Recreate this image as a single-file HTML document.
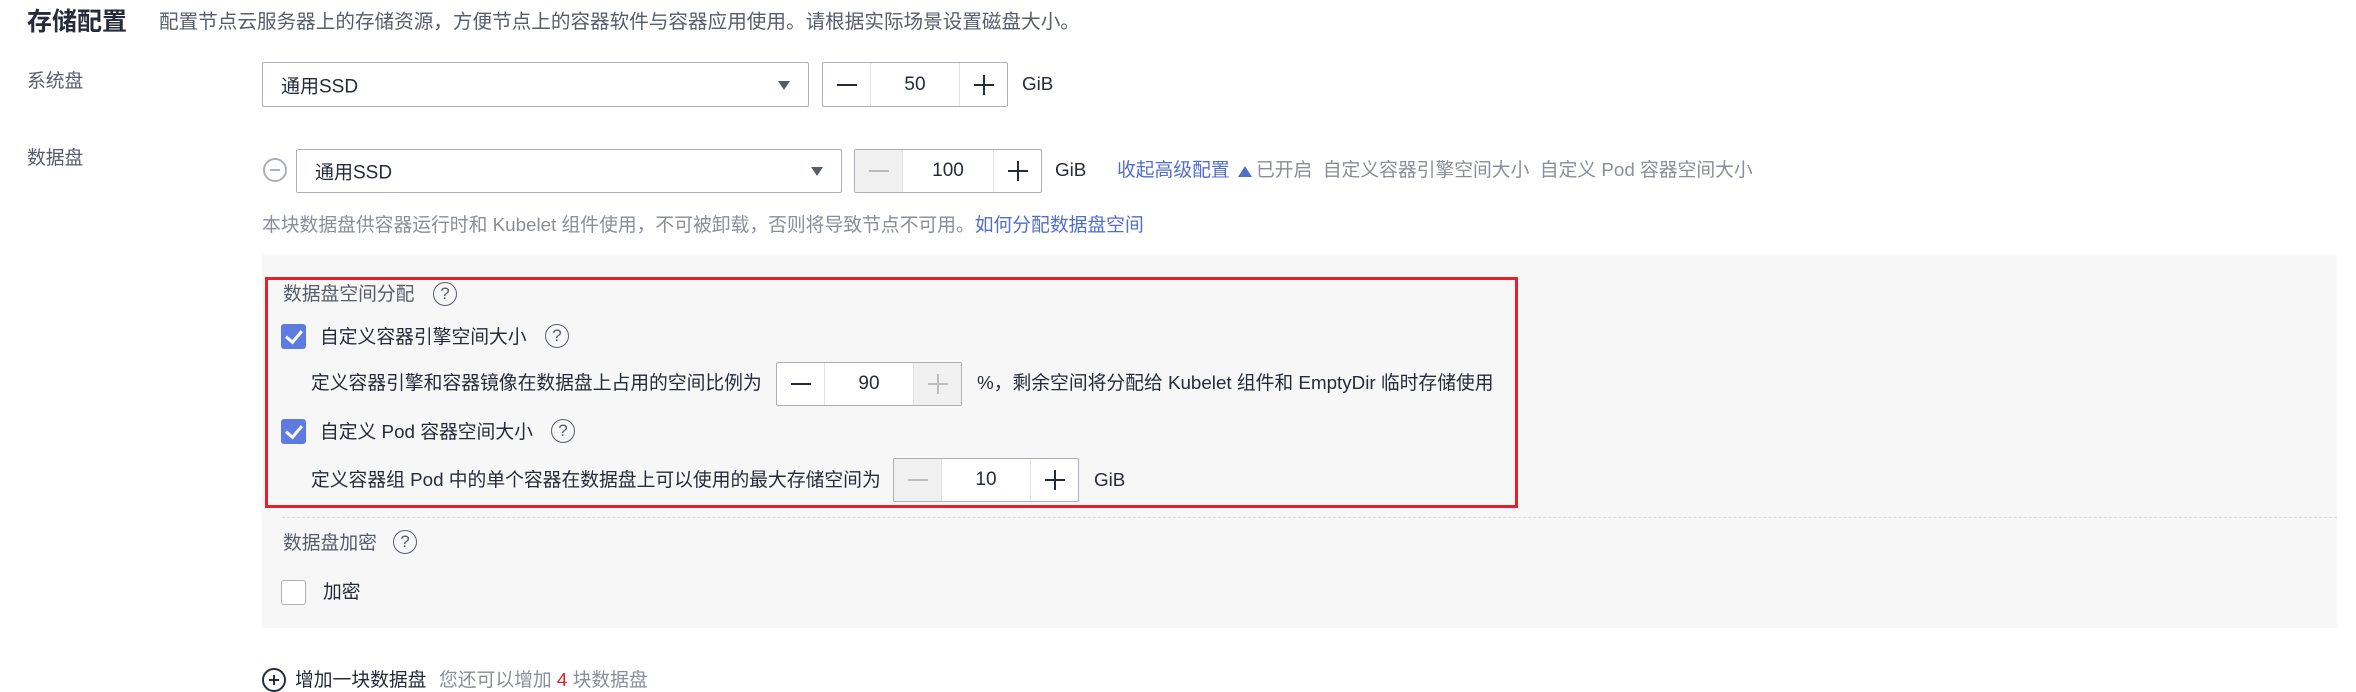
<!DOCTYPE html>
<html><head><meta charset="utf-8"><style>
*{margin:0;padding:0;box-sizing:border-box}
body{width:2356px;height:690px;background:#fff;position:relative;overflow:hidden;font-family:"Liberation Sans","Noto Sans CJK SC",sans-serif;font-size:18.8px;color:#252b3a}
.a{position:absolute;white-space:nowrap;line-height:1}
.lab{color:#575d6c}
.hint{color:#8a8e99}
.link{color:#526ecc}
.sel{position:absolute;border:1.5px solid #adb0b8;border-radius:2px;background:#fff}
.sel span{position:absolute;left:18px;top:50%;transform:translateY(-50%);font-size:19px}
.sel i{position:absolute;right:18px;top:50%;margin-top:-4px;border-left:6px solid transparent;border-right:6px solid transparent;border-top:9px solid #575d6c}
.stp{position:absolute;border:1.5px solid #adb0b8;border-radius:2px;background:#fff;display:flex}
.stp div{display:flex;align-items:center;justify-content:center;font-size:19px}
.stp .b{width:47px;position:relative}
.stp .m{flex:1;border-left:1.5px solid #dfe1e6;border-right:1.5px solid #dfe1e6}
.stp .dis{background:#f0f0f0}
.h{position:absolute;width:2px;height:20px;left:50%;top:50%;margin:-10px 0 0 -1px}
.w{position:absolute;height:2px;width:20px;left:50%;top:50%;margin:-1px 0 0 -10px}
.q{position:absolute;width:24px;height:24px;border:1.8px solid #575d6c;border-radius:50%;font-size:17px;text-align:center;line-height:21px;color:#575d6c}
.cb{position:absolute;width:25px;height:25px;border-radius:3px;background:#5e7ce0}
.cb:after{content:"";position:absolute;left:8px;top:3px;width:7px;height:13px;border-right:3px solid #fff;border-bottom:3px solid #fff;transform:rotate(40deg)}
</style></head><body>
<div class="a" style="left:27px;top:10px;font-size:25px;font-weight:bold">存储配置</div>
<div class="a lab" style="left:159px;top:13px;font-size:19.6px">配置节点云服务器上的存储资源，方便节点上的容器软件与容器应用使用。请根据实际场景设置磁盘大小。</div>

<div class="a lab" style="left:27px;top:72px">系统盘</div>
<div class="sel" style="left:262px;top:62px;width:547px;height:45px"><span>通用SSD</span><i></i></div>
<div class="stp" style="left:822px;top:62px;width:186px;height:45px"><div class="b"><b class="w" style="background:#252b3a"></b></div><div class="m">50</div><div class="b"><b class="w" style="background:#252b3a"></b><b class="h" style="background:#252b3a"></b></div></div>
<div class="a" style="left:1022px;top:75px">GiB</div>

<div class="a lab" style="left:27px;top:149px">数据盘</div>
<div class="a" style="left:263px;top:158px;width:24px;height:24px;border:2px solid #adb0b8;border-radius:50%"><b style="position:absolute;left:5px;top:9px;width:10px;height:2px;background:#adb0b8"></b></div>
<div class="sel" style="left:296px;top:149px;width:546px;height:44px"><span>通用SSD</span><i></i></div>
<div class="stp" style="left:854px;top:149px;width:188px;height:44px"><div class="b dis"><b class="w" style="background:#bbb"></b></div><div class="m">100</div><div class="b"><b class="w" style="background:#252b3a"></b><b class="h" style="background:#252b3a"></b></div></div>
<div class="a" style="left:1055px;top:161px">GiB</div>
<div class="a link" style="left:1117px;top:161px">收起高级配置</div>
<div class="a" style="left:1238px;top:166px;border-left:7px solid transparent;border-right:7px solid transparent;border-bottom:11px solid #526ecc"></div>
<div class="a hint" style="left:1256px;top:161px">已开启&nbsp; 自定义容器引擎空间大小&nbsp; 自定义 Pod 容器空间大小</div>

<div class="a hint" style="left:262px;top:216px">本块数据盘供容器运行时和 Kubelet 组件使用，不可被卸载，否则将导致节点不可用。<span class="link">如何分配数据盘空间</span></div>

<div class="a" style="left:262px;top:255px;width:2075px;height:373px;background:#f7f7f7"></div>
<div class="a" style="left:265px;top:277px;width:1253px;height:231px;border:3px solid #e5202a"></div>
<div class="a lab" style="left:283px;top:285px">数据盘空间分配</div>
<div class="q" style="left:433px;top:282px">?</div>
<div class="cb" style="left:281px;top:324px"></div>
<div class="a" style="left:320px;top:328px">自定义容器引擎空间大小</div>
<div class="q" style="left:545px;top:324px">?</div>
<div class="a" style="left:311px;top:374px">定义容器引擎和容器镜像在数据盘上占用的空间比例为</div>
<div class="stp" style="left:776px;top:362px;width:186px;height:44px"><div class="b"><b class="w" style="background:#252b3a"></b></div><div class="m">90</div><div class="b dis"><b class="w" style="background:#bbb"></b><b class="h" style="background:#bbb"></b></div></div>
<div class="a" style="left:977px;top:374px">%，剩余空间将分配给 Kubelet 组件和 EmptyDir 临时存储使用</div>
<div class="cb" style="left:281px;top:419px"></div>
<div class="a" style="left:320px;top:423px">自定义 Pod 容器空间大小</div>
<div class="q" style="left:551px;top:419px">?</div>
<div class="a" style="left:311px;top:471px">定义容器组 Pod 中的单个容器在数据盘上可以使用的最大存储空间为</div>
<div class="stp" style="left:893px;top:458px;width:186px;height:44px"><div class="b dis"><b class="w" style="background:#bbb"></b></div><div class="m">10</div><div class="b"><b class="w" style="background:#252b3a"></b><b class="h" style="background:#252b3a"></b></div></div>
<div class="a" style="left:1094px;top:471px">GiB</div>

<div class="a" style="left:282px;top:517px;width:2055px;border-top:1px dashed #dcdcdc"></div>
<div class="a lab" style="left:283px;top:534px">数据盘加密</div>
<div class="q" style="left:393px;top:530px">?</div>
<div class="a" style="left:281px;top:580px;width:25px;height:25px;border:1.5px solid #adb0b8;border-radius:3px;background:#fff"></div>
<div class="a" style="left:323px;top:583px">加密</div>

<div class="a" style="left:262px;top:668px;width:24px;height:24px;border:2px solid #252b3a;border-radius:50%"><b style="position:absolute;left:5px;top:9px;width:10px;height:2px;background:#252b3a"></b><b style="position:absolute;left:9px;top:5px;width:2px;height:10px;background:#252b3a"></b></div>
<div class="a" style="left:295px;top:671px">增加一块数据盘</div>
<div class="a hint" style="left:439px;top:671px">您还可以增加 <span style="color:#e5202a">4</span> 块数据盘</div>
</body></html>
